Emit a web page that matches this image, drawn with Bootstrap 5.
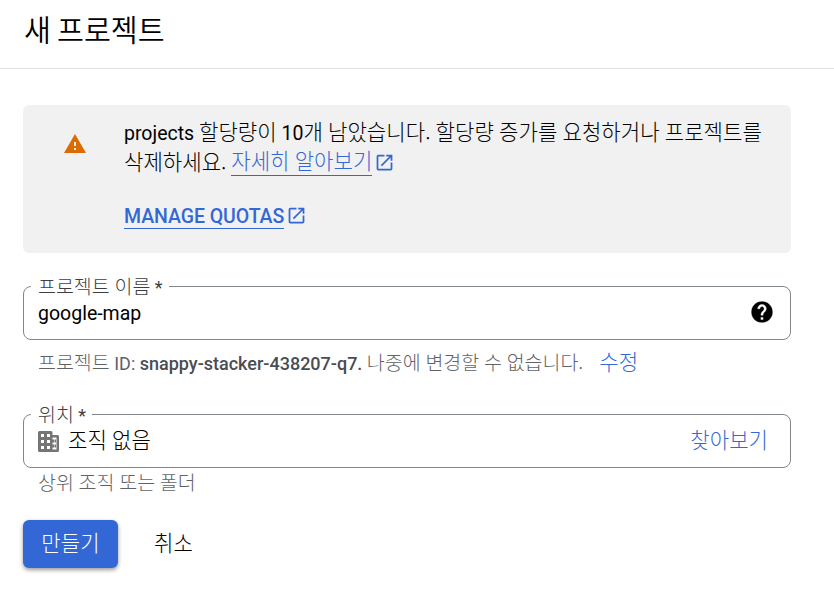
<!DOCTYPE html>
<html lang="ko">
<head>
<meta charset="utf-8">
<meta name="viewport" content="width=device-width, initial-scale=1">
<title>새 프로젝트</title>
<link href="https://cdn.jsdelivr.net/npm/bootstrap@5.3.0/dist/css/bootstrap.min.css" rel="stylesheet">
<style>
  :root { --blue: #3367d6; --grey: #5f6368; }
  body { font-family: Roboto, "Noto Sans CJK KR", sans-serif; font-size: 19.5px; line-height: 30px; color: #000; background: #fff; }
  .ko { font-family: "Noto Sans CJK KR", sans-serif; font-weight: 300; font-size: 1.083em; line-height: 1; word-spacing: -.035em; }
  .page-head { height: 69px; padding: 14px 24px 0; border-bottom: 1px solid #e0e0e0; }
  .page-head h1 { font-size: 27px; line-height: 36px; margin: 0; }
  .page-head .ko { font-weight: 350; word-spacing: -.07em; }
  .page-main { padding: 36px 43px 24px 23px; }
  .quota { height: 148px; padding: 14px 0 0 40px; background: #f1f1f1; border-radius: 6px; border: 0; }
  .quota-icon { width: 24px; height: 24px; margin: 13px 37px 0 0; }
  .blue-text { color: var(--blue); text-decoration: none; }
  .ruled { border-bottom: 1px solid var(--blue); display: inline-block; line-height: 27px; height: 27px; }
  .open-icon { width: 21px; height: 21px; fill: var(--blue); margin-left: 2px; }
  .more-line { height: 26px; }
  .manage { margin-top: 27px; font-weight: 500; }
  .manage .ruled { line-height: 30px; letter-spacing: -.06px; }
  .outlined { border: 1px solid #80868b; border-radius: 8px; padding: 0 14px; height: 64px; }
  .outlined legend { float: none; width: auto; margin: 0 0 0 -7px; padding: 0 6px 0 7px; font-size: 18px; line-height: 21px; height: 20px; color: #3c4043; }
  .hint { font-size: 18px; line-height: 24px; color: var(--grey); padding-left: 15px; }
  .hint b { font-weight: 500; color: #4a4d51; }
  .field-row { height: 32px; }
  .project-name { margin-top: 23px; }
  .help-icon { margin: 0 1px 0 0; }
  .id-hint { margin-top: 11px; }
  .edit-link { font-size: 19.5px; margin-left: 16px; }
  .place { margin-top: 28px; }
  .org-icon { margin: 3px 0 0 -2px; }
  .org-name { margin: -1px 0 0 6px; }
  .browse { margin: 0 8px 0 0; }
  .place + .hint { margin-top: 4px; }
  .actions { margin-top: 24px; }
  .btn-create { width: 95px; height: 48px; padding: 2px 0 0; background: var(--blue); color: #fff; border: 0; border-radius: 6px; font-size: 19.5px; box-shadow: 0 2px 4px rgba(0,0,0,.4); }
  .btn-create:hover { background: #2a56c6; color: #fff; }
  .btn-cancel { height: 48px; padding: 1px 0 0; border: 0; color: #000; font-size: 19.5px; margin-left: 36px; }
</style>
<script src="https://cdn.jsdelivr.net/npm/bootstrap@5.3.0/dist/js/bootstrap.bundle.min.js"></script>
</head>
<body>
<svg class="d-none" xmlns="http://www.w3.org/2000/svg">
  <symbol id="open" viewBox="0 0 24 24"><path d="M19 19H5V5h7V3H5a2 2 0 0 0-2 2v14a2 2 0 0 0 2 2h14a2 2 0 0 0 2-2v-7h-2v7zM14 3v2h3.59l-9.83 9.83 1.41 1.41L19 6.41V10h2V3h-7z"/></symbol>
</svg>
<header class="page-head"><h1><span class="ko">새 프로젝트</span></h1></header>
<main class="page-main">
  <section class="quota d-flex align-items-start">
    <svg class="quota-icon flex-shrink-0" viewBox="0 0 24 24"><path fill="#dd6b00" d="M1 21h22L12 2 1 21zm12-3h-2v-2h2v2zm0-4h-2v-4h2v4z"/></svg>
    <div class="text-nowrap">
      <div>projects <span class="ko">할당량이</span> 10<span class="ko">개 남았습니다. 할당량 증가를 요청하거나 프로젝트를</span></div>
      <div class="more-line d-flex align-items-center"><span class="ko">삭제하세요.</span>&nbsp;<a href="#" class="blue-text ruled"><span class="ko">자세히 알아보기</span></a><svg class="open-icon"><use href="#open"/></svg></div>
      <div class="manage d-flex align-items-center"><a href="#" class="blue-text ruled">MANAGE QUOTAS</a><svg class="open-icon"><use href="#open"/></svg></div>
    </div>
  </section>

  <fieldset class="outlined project-name">
    <legend><span class="ko">프로젝트 이름</span> *</legend>
    <div class="field-row d-flex align-items-center justify-content-between">
      <span class="pt-1">google-map</span>
      <svg class="help-icon" width="26" height="26" viewBox="0 0 24 24"><path d="M12 2C6.48 2 2 6.48 2 12s4.48 10 10 10 10-4.48 10-10S17.52 2 12 2zm1 17h-2v-2h2v2zm2.07-7.75l-.9.92C13.45 12.9 13 13.5 13 15h-2v-.5c0-1.1.45-2.1 1.17-2.83l1.24-1.26c.37-.36.59-.86.59-1.41 0-1.1-.9-2-2-2s-2 .9-2 2H8c0-2.21 1.79-4 4-4s4 1.79 4 4c0 .88-.36 1.68-.93 2.25z" stroke="#fff" stroke-width=".35"/></svg>
    </div>
  </fieldset>
  <div class="hint id-hint text-nowrap"><span class="ko">프로젝트</span> ID: <b>snappy-stacker-438207-q7.</b> <span class="ko">나중에 변경할 수 없습니다.</span><a href="#" class="blue-text edit-link"><span class="ko">수정</span></a></div>

  <fieldset class="outlined place">
    <legend><span class="ko">위치</span> *</legend>
    <div class="field-row d-flex align-items-center">
      <svg class="org-icon" width="26" height="26" viewBox="0 0 26 26"><path fill="#757575" fill-rule="evenodd" d="M3.500 2H15q1.500 0 1.500 1.500V6H21.500q1.500 0 1.500 1.500V21.500q0 1.500-1.500 1.500H3.500Q2 23 2 21.500V3.500Q2 2 3.500 2zM5 5v3h3V5zM11 5v3h3V5zM5 11v3h3v-3zM11 11v3h3v-3zM5 17v3h3v-3zM11 17v3h3v-3zM16.500 8.500v2H18v3h-1.500v2H18v3h-1.500v2h4v-12z"/><path fill="#757575" d="M18.500 10.500h1.500v3h-1.500zM18.500 15.500h1.500v3h-1.500z"/></svg>
      <span class="ko org-name">조직 없음</span>
      <a href="#" class="blue-text ms-auto browse lh-1"><span class="ko">찾아보기</span></a>
    </div>
  </fieldset>
  <div class="hint"><span class="ko">상위 조직 또는 폴더</span></div>

  <div class="d-flex actions">
    <button type="button" class="btn btn-create"><span class="ko">만들기</span></button>
    <button type="button" class="btn btn-cancel"><span class="ko">취소</span></button>
  </div>
</main>
</body>
</html>
